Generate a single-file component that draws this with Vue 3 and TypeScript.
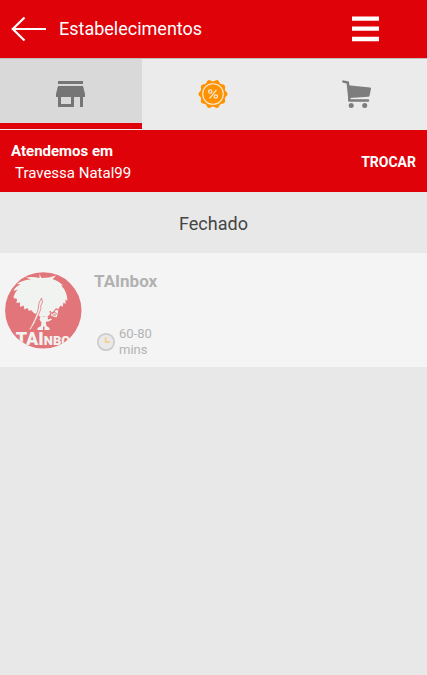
<script setup lang="ts">
interface Store {
  name: string
  wait: string
}

const address = 'Travessa Natal99'
const stores: Store[] = [{ name: 'TAInbox', wait: '60-80 mins' }]

// Outline of the ten-pointed offer seal, centred on 16,16.
const sealPoints: string = Array.from({ length: 60 }, (_, i) => {
  const angle = (i * Math.PI) / 30
  const radius = 13.6 + Math.cos(angle * 10)
  return `${(16 + radius * Math.cos(angle)).toFixed(2)},${(16 + radius * Math.sin(angle)).toFixed(2)}`
}).join(' ')
</script>

<template>
  <div class="page">
    <header class="bar">
      <button class="icon-button" type="button" aria-label="Voltar">
        <svg width="36" height="26" viewBox="0 0 36 26" fill="none" stroke="#fff" stroke-width="2.2">
          <path d="M13.5 1.5 1.8 13 13.5 24.5M2 13H35" />
        </svg>
      </button>
      <h1 class="title">Estabelecimentos</h1>
      <button class="icon-button menu" type="button" aria-label="Menu">
        <svg width="27" height="26" viewBox="0 0 27 26" fill="#fff">
          <path d="M0 .5H27V4.8H0zM0 10.5H27V14.8H0zM0 20.7H27V25.3H0z" />
        </svg>
      </button>
    </header>

    <nav class="tabs">
      <button class="tab active" type="button" aria-label="Estabelecimentos">
        <svg width="30" height="28" viewBox="0 0 30 28" fill="#757575">
          <path d="M2 1H27V4H2zM2 6H27L29 14V17H27V27H24V17H18V27H2V17H0V14zM5 17V24H15V17z" fill-rule="evenodd" />
        </svg>
      </button>
      <button class="tab" type="button" aria-label="Ofertas">
        <svg width="32" height="32" viewBox="0 0 32 32">
          <polygon :points="sealPoints" fill="#ff9200" />
          <g fill="none" stroke="#f5eee2" stroke-width="1.1">
            <circle cx="16" cy="16" r="10.3" />
            <circle cx="13.2" cy="13.6" r="1.7" />
            <circle cx="18.8" cy="18.6" r="1.7" />
            <path d="M19.4 11.8 12.6 20.4" />
          </g>
        </svg>
      </button>
      <button class="tab" type="button" aria-label="Carrinho">
        <svg width="30" height="30" viewBox="-1 0 30 30">
          <path d="M1.4 2.6 5.8 3.5 7.3 18.4V21.6H26" fill="none" stroke="#7d7d7d" stroke-width="2.5" stroke-linecap="round" stroke-linejoin="round" />
          <path d="M6.3 6.3 28 8.4Q29.2 8.6 29 9.8L27.5 16.8Q27.3 17.7 26.2 17.8L7.5 19z" fill="#7d7d7d" />
          <circle cx="9.2" cy="26.4" r="2.5" fill="#7d7d7d" />
          <circle cx="22.7" cy="26.4" r="2.5" fill="#7d7d7d" />
        </svg>
      </button>
    </nav>

    <section class="location">
      <div>
        <p class="serve">Atendemos em</p>
        <p class="address">{{ address }}</p>
      </div>
      <button class="change" type="button">TROCAR</button>
    </section>

    <main>
      <h2 class="status">Fechado</h2>
      <ul class="stores">
        <li v-for="store in stores" :key="store.name" class="store">
          <svg class="logo" width="77" height="77" viewBox="0 0 77 77" role="img" :aria-label="store.name">
            <defs>
              <clipPath id="logo-disc"><circle cx="38.3" cy="38.4" r="38.2" /></clipPath>
            </defs>
            <g clip-path="url(#logo-disc)" fill="#f1f3f0">
              <rect width="77" height="77" fill="#e27579" />
              <path d="M34.5 2 36.5 6Q44 6 51 3.5Q49 6 47.5 7Q54 9 58 13.5L56 13.5Q60 17 61 21Q62.5 25 62.3 29L60.5 27.5 60.5 32 58.5 30.5 57.5 35 55.5 33.5 53 37.5 51 36Q49 40 46 41.5L42.5 44.5H35L32 42.5Q28.5 41.5 26 38L24 39 22.5 36 19.5 37.5 18.5 33.5 15 35 15 30.5 11.5 31 12 27 8.5 26Q9 21 13 17.5L8.5 19Q10 14.5 15.5 12.5L12 12Q18 7.5 26 7.5L21 5.5Q28 4.5 34.5 6z" />
              <path d="M35.8 43.5Q38.5 46 42.5 43.5L43 48 40.7 50.5 41.5 54 44.5 56V58H39.5V54.5H38V58H32.5V56L36 54 36.5 50.5 34.5 47.5z" />
              <path d="M42 48 46 46.5 47 47.5 42.5 50z" />
              <path d="M36.5 26 37.5 30 35.5 34.5 36 36.5 33 44 29.5 51.5 25.5 58 24.2 57.5 29 48 33 38 34 31z" stroke="#e27579" stroke-width=".8" />
              <path d="M45 39 47.5 42 51 37 54 38.5 52 46 46 44.5z" stroke="#e27579" stroke-width="1" />
              <path d="M47.5 43H51M49 40 52 42" stroke="#e27579" stroke-width="1" />
              <text class="wordmark" x="38" y="73" font-size="18" text-anchor="middle">TAI<tspan font-size="13">NBO</tspan></text>
            </g>
          </svg>
          <div class="details">
            <h3 class="name">{{ store.name }}</h3>
            <div class="wait">
              <svg width="20" height="20" viewBox="0 0 20 20" fill="none" aria-hidden="true">
                <circle cx="10" cy="10" r="8.2" fill="#e9e9e9" stroke="#cbcbcb" stroke-width="1.7" />
                <path d="M9.7 5V10.2H14" stroke="#f6d08e" stroke-width="1.8" />
              </svg>
              <span class="time">{{ store.wait }}</span>
            </div>
          </div>
        </li>
      </ul>
    </main>
  </div>
</template>

<style>
body {
  margin: 0;
  background: #e8e8e8;
}
</style>

<style scoped>
.page {
  font-family: Roboto, "Liberation Sans", sans-serif;
  color: #444;
}

h1, h2, h3, p, ul {
  margin: 0;
  padding: 0;
}

button {
  padding: 0;
  border: 0;
  background: none;
  font: inherit;
  color: inherit;
  cursor: pointer;
}

svg {
  display: block;
}

.bar {
  display: flex;
  align-items: center;
  gap: 12px;
  height: 58px;
  padding: 0 48px 0 11px;
  background: #e00209;
  color: #fff;
}

.icon-button {
  flex: none;
}

.menu {
  margin-left: auto;
}

.title {
  font-size: 18px;
  font-weight: 400;
  line-height: 24px;
}

.tabs {
  display: grid;
  grid-template-columns: repeat(3, 1fr);
  height: 70px;
  border-top: 1px solid #bfbfbf;
  border-bottom: 1px solid #ececec;
  background: #ebebeb;
}

.tab {
  display: flex;
  align-items: center;
  justify-content: center;
}

.active {
  box-sizing: border-box;
  padding-top: 6px;
  border-bottom: 6px solid #e00209;
  background: #d9d9d9;
}

.location {
  display: flex;
  align-items: center;
  justify-content: space-between;
  box-sizing: border-box;
  min-height: 62px;
  padding: 2px 11px 0;
  background: #e00209;
  color: #fff;
}

.serve,
.address {
  font-size: 15px;
  line-height: 22px;
}

.serve {
  font-weight: 700;
}

.address {
  padding-left: 4px;
}

.change {
  font-size: 14px;
  font-weight: 700;
}

.status {
  padding: 20px 0 17px;
  font-size: 18px;
  font-weight: 400;
  line-height: 24px;
  text-align: center;
}

.stores {
  list-style: none;
}

.store {
  display: flex;
  gap: 12px;
  align-items: flex-start;
  box-sizing: border-box;
  min-height: 114px;
  padding: 16px 5px 8px;
  background: #f4f4f4;
}

.logo {
  flex: none;
  margin-top: 3px;
}

.wordmark {
  font-family: Roboto, sans-serif;
  font-weight: 900;
}

.details {
  display: flex;
  flex-direction: column;
  justify-content: space-between;
  align-self: stretch;
}

.name {
  font-size: 17px;
  font-weight: 700;
  line-height: 24px;
  color: #b1b1b1;
}

.wait {
  display: flex;
  align-items: center;
  gap: 3px;
  padding: 0 0 1px 2px;
}

.time {
  width: 40px;
  font-size: 13px;
  line-height: 16px;
  color: #b3b3b3;
}
</style>
